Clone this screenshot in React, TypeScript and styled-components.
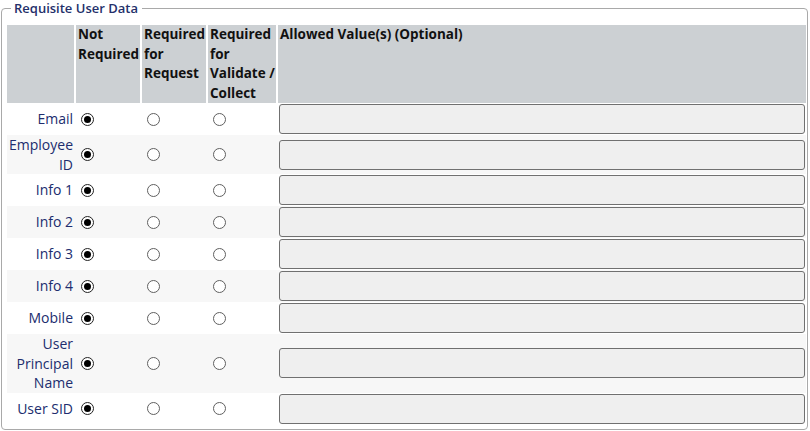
import React from "react";
import styled, { createGlobalStyle } from "styled-components";

const Global = createGlobalStyle`
  html, body { margin: 0; padding: 0; background: #fff; }
  body { font-family: "Open Sans", "Liberation Sans", sans-serif; }
`;

const Fieldset = styled.fieldset`
  margin: 0 0 0 1px;
  width: 807px;
  height: 430px;
  box-sizing: border-box;
  border: 1px solid #a9a9a9;
  border-radius: 4px;
  padding: 9px 1px 4px 5px;
  min-width: 0;
`;

const Legend = styled.legend`
  margin-left: 4px;
  padding: 0 4px 0 3px;
  font-size: 13px;
  line-height: 16px;
  font-weight: 600;
  color: #24306a;
`;

const Table = styled.table`
  width: 799px;
  table-layout: fixed;
  border-collapse: collapse;
  font-size: 14px;
`;

const HeadCell = styled.th<{ $w?: number; $last?: boolean }>`
  ${(p) => (p.$w ? `width: ${p.$w}px;` : "")}
  background: #ccd0d3;
  color: #111;
  font-size: 13.5px;
  font-weight: 700;
  text-align: left;
  vertical-align: top;
  line-height: 19.5px;
  padding: 0 0 0 2px;
  border-right: ${(p) => (p.$last ? "0" : "2px solid #fff")};
  height: 78px;
  box-sizing: border-box;
`;

const Row = styled.tr<{ $alt: boolean }>`
  background: ${(p) => (p.$alt ? "#f7f7f7" : "#fff")};
`;

const LabelCell = styled.td`
  text-align: right;
  color: #202d6e;
  line-height: 19.5px;
  padding: 0 2px 0 0;
  vertical-align: middle;
`;

const RadioCell = styled.td`
  padding: 0;
  vertical-align: middle;
`;

const Radio = styled.input.attrs({ type: "radio" })`
  appearance: none;
  -webkit-appearance: none;
  display: block;
  width: 13px;
  height: 13px;
  margin: 0 0 0 6px;
  border: 1px solid #606060;
  border-radius: 50%;
  background: #fff;
  box-sizing: border-box;
  position: relative;
  &:checked {
    border-color: #222;
  }
  &:checked::after {
    content: "";
    position: absolute;
    left: 2px;
    top: 2px;
    width: 7px;
    height: 7px;
    border-radius: 50%;
    background: #000;
  }
`;

const InputCell = styled.td`
  padding: 1px 0 1px 2px;
  vertical-align: middle;
`;

const ValueInput = styled.input`
  display: block;
  width: 526px;
  height: 30px;
  box-sizing: border-box;
  border: 1px solid #707070;
  border-radius: 3px;
  background: #efefef;
  font: inherit;
  padding: 0 4px;
`;

const rows: React.ReactNode[] = [
  "Email",
  <>Employee<br />ID</>,
  "Info 1",
  "Info 2",
  "Info 3",
  "Info 4",
  "Mobile",
  <>User<br />Principal<br />Name</>,
  "User SID",
];

export default function App() {
  return (
    <>
      <Global />
      <Fieldset>
        <Legend>Requisite User Data</Legend>
        <Table>
          <thead>
            <tr>
              <HeadCell $w={68}></HeadCell>
              <HeadCell $w={66}>Not Required</HeadCell>
              <HeadCell $w={66}>Required for Request</HeadCell>
              <HeadCell $w={70}>Required for Validate / Collect</HeadCell>
              <HeadCell $last>Allowed Value(s) (Optional)</HeadCell>
            </tr>
          </thead>
          <tbody>
            {rows.map((label, i) => (
              <Row key={i} $alt={i % 2 === 1}>
                <LabelCell>{label}</LabelCell>
                <RadioCell>
                  <Radio name={`r${i}`} defaultChecked />
                </RadioCell>
                <RadioCell>
                  <Radio name={`r${i}`} />
                </RadioCell>
                <RadioCell>
                  <Radio name={`r${i}`} />
                </RadioCell>
                <InputCell>
                  <ValueInput disabled />
                </InputCell>
              </Row>
            ))}
          </tbody>
        </Table>
      </Fieldset>
    </>
  );
}
